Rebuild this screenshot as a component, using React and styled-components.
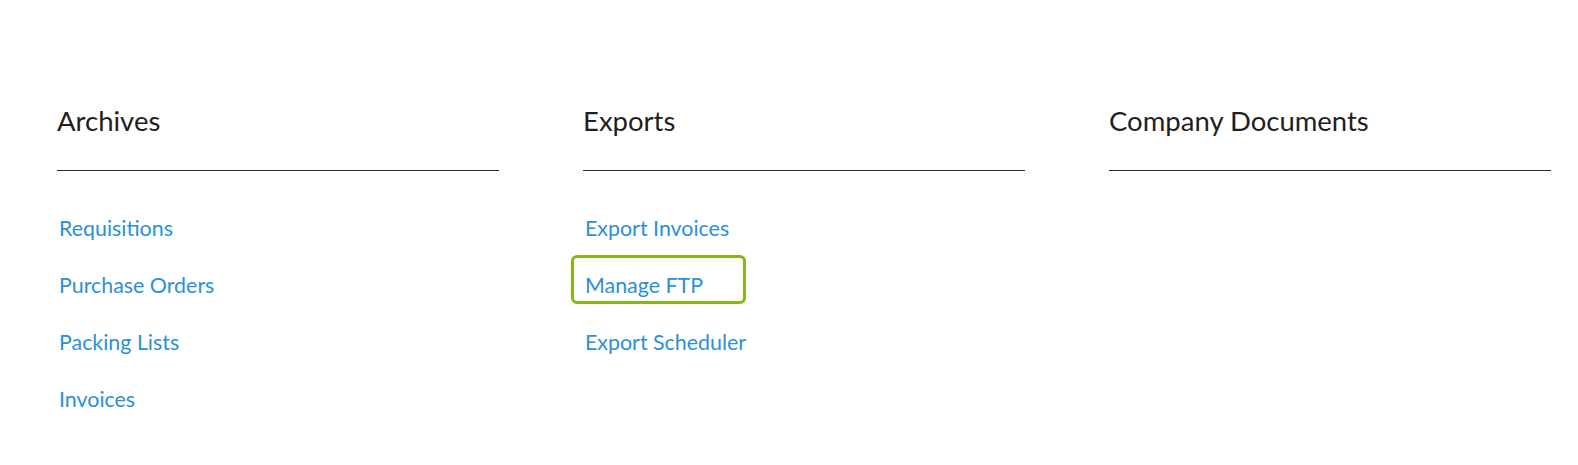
import React from "react";
import styled, { createGlobalStyle } from "styled-components";

const GlobalStyle = createGlobalStyle`
  body {
    margin: 0;
    background: #fff;
    font-family: Lato, "Noto Sans", sans-serif;
  }
`;

const Page = styled.div`
  display: grid;
  grid-template-columns: repeat(3, 442px);
  column-gap: 84px;
  padding: 104px 0 40px 57px;
`;

const Section = styled.section`
  display: flex;
  flex-direction: column;
`;

const Heading = styled.h2`
  margin: 0;
  padding-bottom: 33px;
  border-bottom: 1px solid #2a2a2a;
  font-size: 27.5px;
  line-height: 33px;
  font-weight: 400;
  color: #1f1f1f;
`;

const LinkList = styled.ul`
  list-style: none;
  margin: 0;
  padding: 45px 0 0 2px;
  display: flex;
  flex-direction: column;
  gap: 32px;
`;

const Item = styled.li`
  position: relative;
  font-size: 21.4px;
  line-height: 25px;
`;

const Link = styled.a`
  color: #2b90d8;
  text-decoration: none;
  cursor: pointer;

  &:hover {
    text-decoration: underline;
  }
`;

/* green highlight drawn over the focused link */
const Highlight = styled.span`
  position: absolute;
  left: -14px;
  top: -18px;
  width: 175px;
  height: 49px;
  box-sizing: border-box;
  border: 3px solid #82b81c;
  border-radius: 6px;
  pointer-events: none;
`;

const sections = [
  {
    title: "Archives",
    links: ["Requisitions", "Purchase Orders", "Packing Lists", "Invoices"],
  },
  {
    title: "Exports",
    links: ["Export Invoices", "Manage FTP", "Export Scheduler"],
    active: "Manage FTP",
  },
  {
    title: "Company Documents",
    links: [],
  },
];

const App = () => (
  <>
    <GlobalStyle />
    <Page>
      {sections.map((section) => (
        <Section key={section.title}>
          <Heading>{section.title}</Heading>
          {section.links.length > 0 && (
            <LinkList>
              {section.links.map((label) => (
                <Item key={label}>
                  {section.active === label && <Highlight />}
                  <Link href="#">{label}</Link>
                </Item>
              ))}
            </LinkList>
          )}
        </Section>
      ))}
    </Page>
  </>
);

export default App;
